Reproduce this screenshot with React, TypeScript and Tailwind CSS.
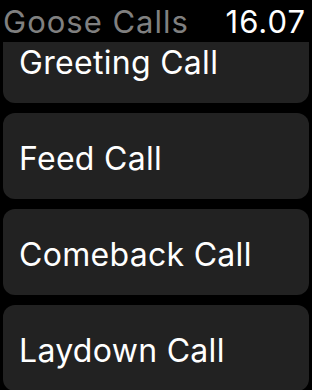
import React from "react";

const calls = ["Greeting Call", "Feed Call", "Comeback Call", "Laydown Call"];

export default function App() {
  return (
    <div
      className="w-[312px] h-[390px] bg-black overflow-hidden flex flex-col"
      style={{ fontFamily: "Inter, 'Noto Sans', sans-serif" }}
    >
      <div className="h-[42px] shrink-0 flex items-start justify-between pl-[3px] pr-[6px] pt-[5px] relative z-10 bg-black">
        <span className="text-[31px] leading-[34px] tracking-[1px] text-[#808080]">Goose Calls</span>
        <span className="text-[31px] leading-[34px] tracking-[1px] text-white">16.07</span>
      </div>
      <div className="flex-1 overflow-hidden">
        <div className="flex flex-col gap-[10px] px-[3px] -mt-[25px]">
          {calls.map((c) => (
            <div
              key={c}
              className="h-[86px] rounded-[12px] bg-[#222222] flex items-center pl-[16px] pt-[5px]"
            >
              <span className="text-[32px] leading-[36px] text-white tracking-[0.3px]">{c}</span>
            </div>
          ))}
        </div>
      </div>
    </div>
  );
}
